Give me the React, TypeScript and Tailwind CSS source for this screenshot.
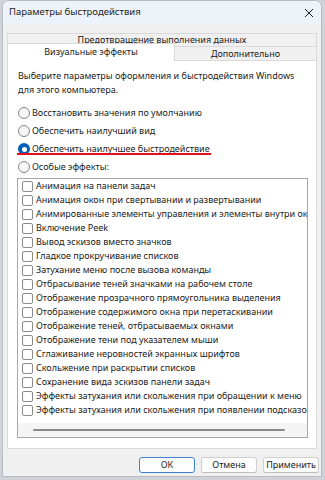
const effects = [
  "Анимация на панели задач",
  "Анимация окон при свертывании и развертывании",
  "Анимированные элементы управления и элементы внутри окна",
  "Включение Peek",
  "Вывод эскизов вместо значков",
  "Гладкое прокручивание списков",
  "Затухание меню после вызова команды",
  "Отбрасывание теней значками на рабочем столе",
  "Отображение прозрачного прямоугольника выделения",
  "Отображение содержимого окна при перетаскивании",
  "Отображение теней, отбрасываемых окнами",
  "Отображение тени под указателем мыши",
  "Сглаживание неровностей экранных шрифтов",
  "Скольжение при раскрытии списков",
  "Сохранение вида эскизов панели задач",
  "Эффекты затухания или скольжения при обращении к меню",
  "Эффекты затухания или скольжения при появлении подсказок",
];

function Radio({ label, checked, marked }: { label: string; checked?: boolean; marked?: boolean }) {
  return (
    <div className="relative flex items-center h-[18px] pl-[1px]">
      {checked ? (
        <span className="w-[12px] h-[12px] rounded-full bg-[#005fb8] flex items-center justify-center">
          <span className="w-[5px] h-[5px] rounded-full bg-white" />
        </span>
      ) : (
        <span className="w-[12px] h-[12px] rounded-full border border-[#858585] bg-[#f6f6f6]" />
      )}
      <span className="ml-[2px]">{label}</span>
      {marked && <span className="absolute left-0 bottom-[3px] w-[194px] h-[2px] bg-[#e3101a]" />}
    </div>
  );
}

function Button({ label, primary }: { label: string; primary?: boolean }) {
  return (
    <div
      className={
        "w-[56px] h-[16px] rounded-[3px] bg-[#fdfdfd] border flex items-center justify-center text-[9px] " +
        (primary ? "border-[#3f80cf]" : "border-[#d0d0d0] border-b-[#bdbdbd]")
      }
    >
      {label}
    </div>
  );
}

export default function App() {
  return (
    <div
      className="w-[325px] h-[480px] bg-[#cfd2d6] pl-[2px] pr-[3px] pb-[3px] text-[#1b1b1b]"
      style={{ fontFamily: '"Noto Sans", "Open Sans", sans-serif' }}
    >
      <div className="h-[477px] flex flex-col bg-[#f0f0f0] border border-[#b9bdc2] rounded-t-[7px] overflow-hidden">
        <div className="h-[23px] shrink-0 bg-[#eef3f9] flex items-center justify-between pl-[6px] pr-[5px]">
          <span className="text-[9.5px]">Параметры быстродействия</span>
          <svg width="10" height="10" viewBox="0 0 10 10" className="mr-[2px]">
            <path d="M1 1L9 9M9 1L1 9" stroke="#1b1b1b" strokeWidth="1" />
          </svg>
        </div>

        <div className="px-[4px] pt-[9px] text-[9px] leading-[14px]">
          <div className="h-[13px] border border-b-0 border-[#d9d9d9] bg-[#f0f0f0] flex justify-center items-start leading-[11px]">
            Предотвращение выполнения данных
          </div>
          <div className="flex items-end h-[17px] -mt-[3px]">
            <div className="relative z-10 w-[168px] h-[18px] -mb-[1px] bg-white border border-b-0 border-[#d9d9d9] flex justify-center pt-[1px]">
              Визуальные эффекты
            </div>
            <div className="flex-1 h-[14px] bg-[#f0f0f0] border-t border-r border-[#d9d9d9] flex justify-center leading-[13px]">
              Дополнительно
            </div>
          </div>

          <div className="h-[389px] bg-white border border-[#d9d9d9] pl-[9px] pr-[8px] pt-[8px]">
            <p className="pl-[1px]">
              Выберите параметры оформления и быстродействия Windows
              <br />
              для этого компьютера.
            </p>
            <div className="mt-[7px] flex flex-col">
              <Radio label="Восстановить значения по умолчанию" />
              <Radio label="Обеспечить наилучший вид" />
              <Radio label="Обеспечить наилучшее быстродействие" checked marked />
              <Radio label="Особые эффекты:" />
            </div>

            <div className="mt-[2px] h-[260px] border border-[#a8a8a8] flex flex-col">
              <div className="flex-1 overflow-hidden pl-[4px]">
                {effects.map((e) => (
                  <div key={e} className="flex items-center h-[14px] whitespace-nowrap">
                    <span className="w-[11px] h-[11px] shrink-0 rounded-[2px] border border-[#8a8a8a] bg-white" />
                    <span className="ml-[3px]">{e}</span>
                  </div>
                ))}
              </div>
              <div className="h-[14px] shrink-0 bg-[#f4f4f4] flex items-center pl-[15px]">
                <span className="w-[252px] h-[2px] rounded-full bg-[#8a8a8a]" />
              </div>
            </div>
          </div>
        </div>

        <div className="flex justify-end gap-[6px] pr-[2px] mt-[8px]">
          <Button label="ОК" primary />
          <Button label="Отмена" />
          <Button label="Применить" />
        </div>
      </div>
    </div>
  );
}
